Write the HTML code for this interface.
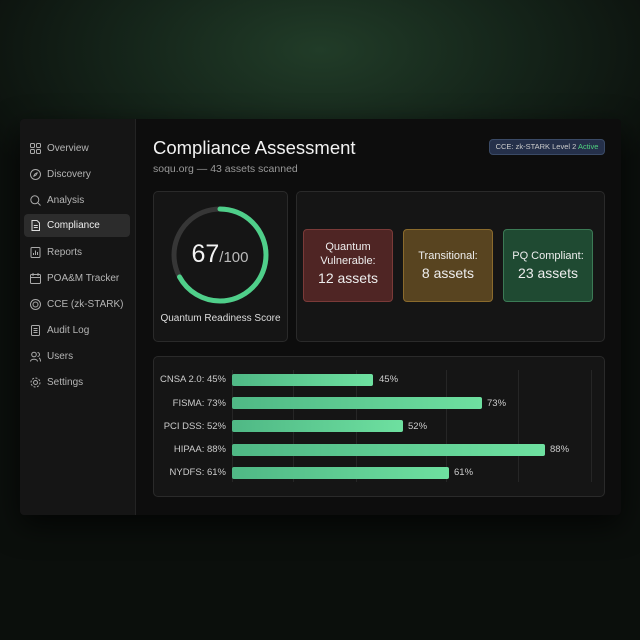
<!DOCTYPE html><html><head><style>
*{margin:0;padding:0;box-sizing:border-box}
body{width:640px;height:640px;overflow:hidden;font-family:"Liberation Sans",sans-serif;background:radial-gradient(ellipse 380px 190px at 320px 50px,#213c28 0%,#15251a 50%,#0b0f0c 100%);position:relative;color:#ddd}
.win{position:absolute;left:20px;top:119px;width:601px;height:396px;background:#0d0d0d;border-radius:4px;box-shadow:0 10px 30px rgba(0,0,0,.7);overflow:hidden}
.side{position:absolute;left:0;top:0;width:116px;height:100%;background:#151515;border-right:1px solid #232323}
.it{position:absolute;left:4px;width:106px;height:23px;font-size:10px;color:#b5b5b5;line-height:23px;padding-left:23px}
.it svg{position:absolute;left:6px;top:6px}
.act{background:#2c2c2c;border-radius:4px;color:#eee}
.abs{position:absolute}
.card{position:absolute;background:#151515;border:1px solid #2a2a2a;border-radius:5px}
.st{position:absolute;width:90px;text-align:center;border-radius:4px;color:#eee;font-size:11px;line-height:14px}
.st b{font-weight:normal;font-size:14px;display:block;margin-top:3px}
.lbl{position:absolute;right:396px;font-size:9.5px;color:#ccc;text-align:right;width:90px}
.bar{position:absolute;left:232px;height:12px;border-radius:2px;background:linear-gradient(90deg,#4fb885,#6ee0a0)}
.pct{position:absolute;font-size:9.5px;color:#ccc}
.gl{position:absolute;top:370px;width:1px;height:112px;background:#262626}
</style></head><body>
<div class="win">
<div class="side">
<div class="it" style="top:18px"><svg width="11" height="11" viewBox="0 0 11 11" fill="none" stroke="#aaa" stroke-width="1"><rect x=".5" y=".5" width="4" height="4" rx="1"/><rect x="6.5" y=".5" width="4" height="4" rx="1"/><rect x=".5" y="6.5" width="4" height="4" rx="1"/><rect x="6.5" y="6.5" width="4" height="4" rx="1"/></svg>Overview</div>
<div class="it" style="top:44px"><svg width="11" height="11" viewBox="0 0 11 11" fill="none" stroke="#aaa"><circle cx="5.5" cy="5.5" r="5"/><path d="M7.5 3.5L6 6 3.5 7.5 5 5z"/></svg>Discovery</div>
<div class="it" style="top:70px"><svg width="11" height="11" viewBox="0 0 11 11" fill="none" stroke="#aaa"><circle cx="4.8" cy="4.8" r="4"/><path d="M7.8 7.8L10.5 10.5"/></svg>Analysis</div>
<div class="it act" style="top:95px"><svg width="11" height="11" viewBox="0 0 11 11" fill="none" stroke="#ddd"><path d="M2 .5h5l2.5 2.5v7.5H2z M3.8 5.5h4 M3.8 7.5h4"/></svg>Compliance</div>
<div class="it" style="top:122px"><svg width="11" height="11" viewBox="0 0 11 11" fill="none" stroke="#aaa"><rect x="1" y=".5" width="9" height="10" rx="1"/><path d="M3.5 8V6 M5.5 8V3.5 M7.5 8V5"/></svg>Reports</div>
<div class="it" style="top:148px"><svg width="11" height="11" viewBox="0 0 11 11" fill="none" stroke="#aaa"><rect x=".5" y="1.5" width="10" height="9" rx="1"/><path d="M3 0v3 M8 0v3 M.5 4.5h10"/></svg>POA&amp;M Tracker</div>
<div class="it" style="top:174px"><svg width="11" height="11" viewBox="0 0 11 11" fill="none" stroke="#aaa"><circle cx="5.5" cy="5.5" r="5"/><circle cx="5.5" cy="5.5" r="2.5"/></svg>CCE (zk-STARK)</div>
<div class="it" style="top:200px"><svg width="11" height="11" viewBox="0 0 11 11" fill="none" stroke="#aaa"><rect x="1.5" y=".5" width="8" height="10" rx="1"/><path d="M3.5 3.5h4 M3.5 5.5h4 M3.5 7.5h4"/></svg>Audit Log</div>
<div class="it" style="top:226px"><svg width="11" height="11" viewBox="0 0 11 11" fill="none" stroke="#aaa"><circle cx="4" cy="3.5" r="2.3"/><path d="M.5 10.5c0-3 7-3 7 0 M7.5 1.5a2 2 0 010 4 M9 7c1.3.5 1.5 2 1.5 3.5"/></svg>Users</div>
<div class="it" style="top:252px"><svg width="11" height="11" viewBox="0 0 11 11" fill="none" stroke="#aaa"><circle cx="5.5" cy="5.5" r="2"/><circle cx="5.5" cy="5.5" r="4.5" stroke-dasharray="2 1.5"/></svg>Settings</div>
</div>
</div>
<div class="abs" style="left:153px;top:137px;font-size:18.5px;color:#f2f2f2">Compliance Assessment</div>
<div class="abs" style="left:153px;top:163px;font-size:10.5px;color:#999">soqu.org — 43 assets scanned</div>
<div class="abs" style="left:489px;top:139px;width:116px;height:16px;background:#25304a;border:1px solid #3a4a66;border-radius:4px;font-size:7.5px;line-height:14px;text-align:center;color:#ccc;white-space:nowrap">CCE: zk-STARK Level 2 <span style="color:#4fd27f">Active</span></div>
<div class="card" style="left:153px;top:191px;width:135px;height:151px"></div>
<svg class="abs" style="left:170px;top:205px" width="100" height="100"><circle cx="50" cy="50" r="46" fill="none" stroke="#363636" stroke-width="5"/><circle cx="50" cy="50" r="46" fill="none" stroke="#4fcf8a" stroke-width="5" stroke-dasharray="193.6 289" transform="rotate(-90 50 50)" stroke-linecap="round"/></svg>
<div class="abs" style="left:170px;top:240px;width:100px;text-align:center;color:#f2f2f2;font-size:25px">67<span style="font-size:15px;color:#bbb">/100</span></div>
<div class="abs" style="left:153px;top:313px;width:135px;text-align:center;font-size:10px;color:#ddd">Quantum Readiness Score</div>
<div class="card" style="left:296px;top:191px;width:309px;height:151px"></div>
<div class="st" style="left:303px;top:229px;height:73px;background:#4f2524;border:1px solid #7a3a38;padding-top:10px">Quantum<br>Vulnerable:<b>12 assets</b></div>
<div class="st" style="left:403px;top:229px;height:73px;background:#584420;border:1px solid #8a6a2c;padding-top:19px">Transitional:<b>8 assets</b></div>
<div class="st" style="left:503px;top:229px;height:73px;background:#1f4a32;border:1px solid #3b7a55;padding-top:19px">PQ Compliant:<b>23 assets</b></div>
<div class="card" style="left:153px;top:356px;width:452px;height:141px"></div>
<div class="gl" style="left:232px"></div><div class="gl" style="left:293px"></div><div class="gl" style="left:356px"></div><div class="gl" style="left:446px"></div><div class="gl" style="left:518px"></div><div class="gl" style="left:591px"></div>
<div class="lbl" style="left:136px;top:374px">CNSA 2.0: 45%</div><div class="bar" style="top:374px;width:141px"></div><div class="pct" style="left:379px;top:374px">45%</div>
<div class="lbl" style="left:136px;top:398px">FISMA: 73%</div><div class="bar" style="top:397px;width:250px"></div><div class="pct" style="left:487px;top:398px">73%</div>
<div class="lbl" style="left:136px;top:421px">PCI DSS: 52%</div><div class="bar" style="top:420px;width:171px"></div><div class="pct" style="left:408px;top:421px">52%</div>
<div class="lbl" style="left:136px;top:444px">HIPAA: 88%</div><div class="bar" style="top:444px;width:313px"></div><div class="pct" style="left:550px;top:444px">88%</div>
<div class="lbl" style="left:136px;top:467px">NYDFS: 61%</div><div class="bar" style="top:467px;width:217px"></div><div class="pct" style="left:454px;top:467px">61%</div>
</body></html>
